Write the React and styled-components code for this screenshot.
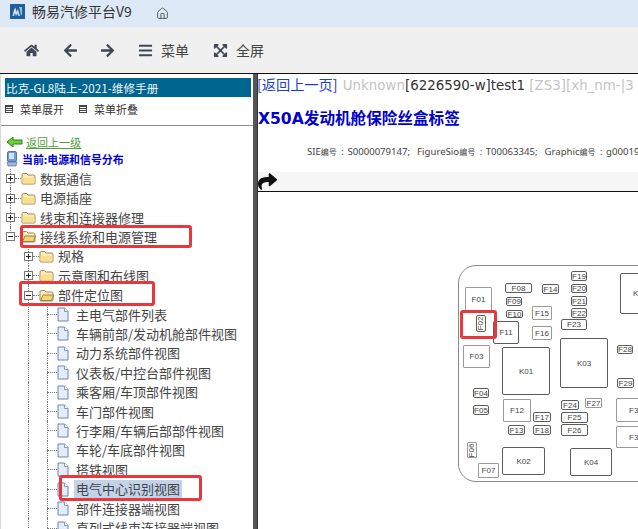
import React from 'react';
import styled, { createGlobalStyle } from 'styled-components';
import { FaHome, FaArrowLeft, FaArrowRight, FaBars, FaExpandArrowsAlt, FaShare } from 'react-icons/fa';
import { Home } from 'lucide-react';

const CJK = `"Noto Sans CJK SC", "Noto Sans", sans-serif`;

const Global = createGlobalStyle`
 html, body { margin:0; padding:0; background:#fff; overflow:hidden; }
 body { font-family:${CJK}; }
 * { box-sizing:border-box; }
`;

const Page = styled.div`
 width:638px;
 height:529px;
 display:flex;
 flex-direction:column;
 overflow:hidden;
 position:relative;
`;

const TitleBar = styled.div`
 height:27px;
 flex:none;
 background:#dde9f6;
 display:flex;
 align-items:center;
 padding:0 0 5px 10px;
 color:#333;
 font-size:14px;
 svg.home { margin-top:5px; }
`;
const AppName = styled.span`
 margin-left:7px;
 width:124px;
 white-space:nowrap;
`;

const Toolbar = styled.div`
 height:47px;
 flex:none;
 background:#f0f0f0;
 border-bottom:1px solid #111;
 display:flex;
 align-items:center;
 padding-left:24px;
 color:#3e4756;
`;
const ToolButton = styled.div`
 display:flex;
 align-items:center;
 gap:8px;
 font-size:14px;
 color:#444;
 width:${p=>p.$w}px;
 flex:none;
 svg { color:#3e4756; font-size:${p=>p.$size || 15}px; flex:none; }
`;

const Body = styled.div`
 flex:1;
 display:flex;
 min-height:0;
`;

const LeftPane = styled.div`
 width:253px;
 flex:none;
 padding:4px 2px 0 4px;
 border-left:1px solid #d8d8d8;
 overflow:hidden;
`;
const BookHeader = styled.div`
 height:19px;
 background:#00658f;
 color:#f1f6f9;
 font-size:11.7px;
 line-height:19px;
 padding-left:1px;
 white-space:nowrap;
`;
const MenuBar = styled.div`
 height:29px;
 display:flex;
 align-items:center;
 font-size:11px;
 color:#333;
 border-bottom:1px solid #8f8f8f;
 margin-left:-4px;
 margin-right:-2px;
 padding:0 0 5px 4px;
`;
const MenuItem = styled.div`
 display:flex;
 align-items:center;
 gap:7px;
 width:74px;
 white-space:nowrap;
`;
const MenuGlyph = styled.span`
 width:8px;
 height:8px;
 border:1px solid #444;
 background:repeating-linear-gradient(#444 0 1px,#fff 1px 2px);
 flex:none;
`;

const BackLink = styled.div`
 display:flex;
 align-items:center;
 gap:3px;
 margin-top:8px;
 height:16px;
 font-size:11px;
 color:#4f9f3a;
 text-decoration:underline;
 padding-left:1px;
`;
const Current = styled.div`
 display:flex;
 align-items:center;
 gap:4px;
 height:17px;
 font-size:10.9px;
 font-weight:700;
 color:#0000d0;
 padding-left:1px;
`;

const Tree = styled.div`
 margin-left:-4px;
 margin-top:2px;
`;
const Row = styled.div`
 height:19.42px;
 display:flex;
 align-items:center;
 padding-left:${p=>p.$depth*18 + 5}px;
 position:relative;
`;
const Guide = styled.span`
 position:absolute;
 left:${p=>p.$x}px;
 top:${p=>p.$top || 0}px;
 bottom:${p=>p.$bottom || 0}px;
 border-left:1px dotted #777;
`;
const Toggle = styled.span`
 width:9px;
 height:9px;
 border:1px solid #777;
 background:#fff;
 flex:none;
 position:relative;
 z-index:1;
 &::before {
  content:"";
  position:absolute;
  left:1px; right:1px; top:3px;
  height:1px;
  background:#222;
 }
 &::after {
  content:"";
  display:${p=>p.$open ? 'none':'block'};
  position:absolute;
  top:1px; bottom:1px; left:3px;
  width:1px;
  background:#222;
 }
`;
const Dots = styled.span`
 width:${p=>p.$w}px;
 margin-left:${p=>p.$ml || 0}px;
 flex:none;
 border-top:1px dotted #777;
`;
const Label = styled.span`
 font-size:13px;
 color:#444;
 white-space:nowrap;
 margin-left:${p=>p.$gap}px;
 line-height:18px;
 background:${p=>p.$selected ? '#c3d3ea':'transparent'};
 padding:0 ${p=>p.$selected ? 2:0}px;
`;

const Splitter = styled.div`
 width:4px;
 flex:none;
 background:#555;
`;

const RightPane = styled.div`
 flex:1;
 min-width:0;
 display:flex;
 flex-direction:column;
 overflow:hidden;
 border-left:1px solid #333;
`;
const TopLine = styled.div`
 height:22px;
 padding:2px 0 0 0;
 font-family:"DejaVu Sans", ${CJK};
 font-size:13.4px;
 line-height:17px;
 color:#333;
 white-space:nowrap;
`;
const Back = styled.span`
 color:#1a3fc4;
 font-family:${CJK};
 font-size:14.2px;
 margin-left:-1px;
 margin-right:1px;
`;
const Faint = styled.span`
 color:#c4c4c4;
`;
const Heading = styled.h1`
 margin:10px 0 0 0;
 font-family:"DejaVu Sans", ${CJK};
 font-size:15.6px;
 line-height:27px;
 font-weight:700;
 color:#0000cc;
 white-space:nowrap;
`;
const Meta = styled.div`
 margin-top:12px;
 padding-left:49px;
 font-family:"Noto Sans", ${CJK};
 font-size:9.6px;
 word-spacing:1px;
 line-height:14px;
 color:#444;
 white-space:nowrap;
`;
const Tag = styled.span`
 font-family:${CJK};
 font-size:8px;
 margin-right:1px;
`;
const ActionBand = styled.div`
 margin-top:13px;
 height:20px;
 background:#f6f6f6;
 border-bottom:1px solid #111;
 flex:none;
 font-size:19px;
 line-height:0;
 color:#111;
 svg { display:block; }
`;

const Diagram = styled.div`
 flex:1;
 position:relative;
 background:#fff;
`;
/* diagram origin is the right pane's image area: x-258, y-192 */
const Shell = styled.div`
 position:absolute;
 left:200px; top:73px;
 width:300px; height:217px;
 border:1px solid #8a8a8a;
 border-radius:18px;
 background:#fff;
`;
const Fuse = styled.div`
 position:absolute;
 left:${p=>p.$x - 258}px;
 top:${p=>p.$y - 192}px;
 width:${p=>p.$w}px;
 height:${p=>p.$h}px;
 border:1px solid ${p=>p.$soft ? '#9a9a9a':'#5c5c5c'};
 border-radius:${p=>p.$soft ? 1:2}px;
 display:flex;
 align-items:center;
 justify-content:center;
 font-family:"Liberation Sans", sans-serif;
 font-size:8px;
 color:#444;
 background:#fff;
 span { display:block; transform:${p=>p.$rot ? 'rotate(-90deg)':'none'}; white-space:nowrap; }
`;
const Callout = styled.div`
 position:absolute;
 border:3px solid #e8383b;
 border-radius:3px;
 left:${p=>p.$x}px;
 top:${p=>p.$y}px;
 width:${p=>p.$w}px;
 height:${p=>p.$h}px;
 pointer-events:none;
`;

const tree = [
 {t:'数据通信',d:0,k:'closed'},
 {t:'电源插座',d:0,k:'closed'},
 {t:'线束和连接器修理',d:0,k:'closed'},
 {t:'接线系统和电源管理',d:0,k:'open'},
 {t:'规格',d:1,k:'closed'},
 {t:'示意图和布线图',d:1,k:'closed'},
 {t:'部件定位图',d:1,k:'open'},
 {t:'主电气部件列表',d:2},
 {t:'车辆前部/发动机舱部件视图',d:2},
 {t:'动力系统部件视图',d:2},
 {t:'仪表板/中控台部件视图',d:2},
 {t:'乘客厢/车顶部件视图',d:2},
 {t:'车门部件视图',d:2},
 {t:'行李厢/车辆后部部件视图',d:2},
 {t:'车轮/车底部件视图',d:2},
 {t:'搭铁视图',d:2},
 {t:'电气中心识别视图',d:2,selected:true},
 {t:'部件连接器端视图',d:2},
 {t:'直列式线束连接器端视图',d:2},
];

const fuses = [
 ['F01',465,287,27,25,{soft:1}],['F02',476,315,10,17,{rot:1}],['F03',463,345,27,23,{soft:1}],
 ['F08',505,283,27,10],['F09',506,297,16,9],['F10',506,310,17,8],['F11',493,321,26,23],
 ['F14',542,284,17,10],['F15',532,306,20,14,{soft:1}],['F16',532,326,20,14,{soft:1}],
 ['F19',571,271,16,10],['F20',571,284,16,9],['F21',571,296,16,10],['F22',571,308,16,10],['F23',561,319,26,11],
 ['K05',620,273,40,41],['K01',502,347,48,48],['K03',560,338,48,50],
 ['F28',617,345,16,9],['F29',617,378,17,10],['F04',473,388,16,10],['F05',473,405,16,10],
 ['F12',503,399,28,23,{soft:1}],['F13',508,425,17,10],['F17',533,412,18,10],['F18',533,425,18,10],
 ['F24',561,400,18,10],['F25',561,412,27,11],['F26',561,424,27,12],['F27',585,398,17,10,{soft:1}],
 ['F30',616,398,40,24,{soft:1}],['F31',616,426,40,22,{soft:1}],['F06',467,442,10,16,{rot:1,soft:1}],
 ['F07',478,463,21,15,{soft:1}],['K02',502,447,43,28],['K04',570,448,42,28],
];

function Logo(){
 return (
  <svg width="15" height="15" viewBox="0 0 15 15" style={{flex:'none'}}>
   <rect width="15" height="15" fill="#1f5f9c"/>
   <path d="M2.5 12 L4 6 L5.5 3.5 L6.5 8 L8 5 L9 9 L10 12 L8.5 12 L7.5 9.5 L6 12 L5 9 L4 12 Z" fill="#cfe0ee"/>
   <path d="M9 3 H12 V10 L11 12 L10 6 Z" fill="#9fc0dc"/>
  </svg>
 );
}

function GreenArrow(){
 return (
  <svg width="17" height="12" viewBox="0 0 17 12" style={{flex:'none'}}>
   <path d="M1 6 L7 1 V4 H16 V8 H7 V11 Z" fill="#6fd13a" stroke="#2f7d16" strokeWidth="1"/>
  </svg>
 );
}

function Monitor(){
 return (
  <svg width="12" height="16" viewBox="0 0 12 16" style={{flex:'none'}}>
   <rect x="1.5" y="0.5" width="9" height="10" rx="1.5" fill="#6f9bd8" stroke="#3a5f9a" strokeWidth="0.8"/>
   <rect x="3" y="2" width="5" height="6" fill="#cfe2f7"/>
   <path d="M1 11 H11 L10 15 H2 Z" fill="#9db5d6" stroke="#5b6f8f" strokeWidth="0.7"/>
  </svg>
 );
}

function Folder({open}){
 return (
  <svg width="15" height="13" viewBox="0 0 15 13" style={{flex:'none'}}>
   <path d="M1 3 Q1 1.5 2.5 1.5 H5.5 L7 3 H12.5 Q14 3 14 4.5 V11 Q14 12 13 12 H2 Q1 12 1 11 Z" fill="#fdeeb8" stroke="#8d7a45" strokeWidth="0.9"/>
   {open
    ? <path d="M1.5 11.5 L4 6 H14.5 L12.5 11.5 Z" fill="#f5d56f" stroke="#8d7a45" strokeWidth="0.9"/>
    : <path d="M1.5 5.5 H13.5 V11 Q13.5 11.5 13 11.5 H2 Q1.5 11.5 1.5 11 Z" fill="#f9e08f"/>}
  </svg>
 );
}

function Doc(){
 return (
  <svg width="12" height="15" viewBox="0 0 12 15" style={{flex:'none'}}>
   <path d="M1 1 H7.5 L11 4.5 V14 H1 Z" fill="#e4edf9" stroke="#6f84ad" strokeWidth="1"/>
   <path d="M7.5 1 V4.5 H11" fill="#fff" stroke="#6f84ad" strokeWidth="0.8"/>
  </svg>
 );
}

export default function App(){
 return (
  <Page>
   <Global/>
   <TitleBar>
    <Logo/>
    <AppName>畅易汽修平台V9</AppName>
    <Home className="home" size={13} strokeWidth={1.5} color="#444"/>
   </TitleBar>
   <Toolbar>
    <ToolButton $w={39}><FaHome/></ToolButton>
    <ToolButton $w={37}><FaArrowLeft/></ToolButton>
    <ToolButton $w={38}><FaArrowRight/></ToolButton>
    <ToolButton $w={75}><FaBars/>菜单</ToolButton>
    <ToolButton $w={70}><FaExpandArrowsAlt/>全屏</ToolButton>
   </Toolbar>
   <Body>
    <LeftPane>
     <BookHeader>比克-GL8陆上-2021-维修手册</BookHeader>
     <MenuBar>
      <MenuItem><MenuGlyph/>菜单展开</MenuItem>
      <MenuItem><MenuGlyph/>菜单折叠</MenuItem>
     </MenuBar>
     <BackLink><GreenArrow/>返回上一级</BackLink>
     <Current><Monitor/>当前:电源和信号分布</Current>
     <Tree>
      {tree.map((n,i)=>(
       <Row key={i} $depth={n.d}>
        {n.d===0 && i<3 ? <Guide $x={9}/> : null}
        {n.d===0 && i===3 ? <Guide $x={9} $bottom={10}/> : null}
        {n.d>=1 ? <Guide $x={27}/> : null}
        {n.d===2 ? <Guide $x={46}/> : null}
        {n.k
         ? <><Toggle $open={n.k==='open'}/><Dots $w={6}/><Folder open={n.k==='open'}/><Label $gap={4}>{n.t}</Label></>
         : <><Dots $w={10} $ml={5}/><Doc/><Label $gap={n.selected?5:7} $selected={n.selected}>{n.t}</Label></>}
       </Row>
      ))}
     </Tree>
    </LeftPane>
    <Splitter/>
    <RightPane>
     <TopLine><Back>[返回上一页]</Back> <Faint>Unknown</Faint>[6226590-w]test1 <Faint>[ZS3][xh_nm-|3</Faint></TopLine>
     <Heading>X50A发动机舱保险丝盒标签</Heading>
     <Meta>SIE<Tag>编号</Tag> : S0000079147;&nbsp; FigureSio<Tag>编号</Tag> : T00063345;&nbsp; Graphic<Tag>编号</Tag> : g0001991</Meta>
     <ActionBand><FaShare/></ActionBand>
     <Diagram>
      <Shell/>
      {fuses.map(([name,x,y,w,h,o])=>(
       <Fuse key={name} $x={x} $y={y} $w={w} $h={h} $rot={o && o.rot} $soft={o && o.soft}><span>{name}</span></Fuse>
      ))}
      <Callout $x={202} $y={118} $w={37} $h={29}/>
     </Diagram>
    </RightPane>
   </Body>
   <Callout $x={20} $y={225} $w={172} $h={23}/>
   <Callout $x={19} $y={281} $w={136} $h={25}/>
   <Callout $x={59} $y={475} $w={143} $h={26}/>
  </Page>
 );
}
